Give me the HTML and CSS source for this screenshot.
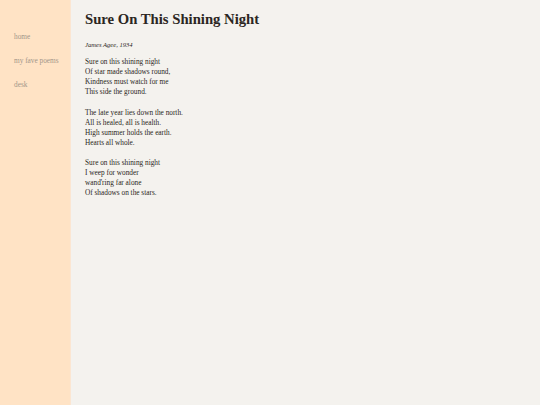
FILE: index.html
```html
<!DOCTYPE html>
<html>
<head>
<meta charset="utf-8">
<link rel="stylesheet" href="styles.css">
</head>
<body>
<div class="layout">
  <nav class="sidebar">
    <a class="nav-link" href="#">home</a>
    <a class="nav-link" href="#">my fave poems</a>
    <a class="nav-link" href="#">desk</a>
  </nav>
  <main class="content">
    <h1 class="title">Sure On This Shining Night</h1>
    <p class="author">James Agee, 1934</p>
    <p class="stanza">Sure on this shining night<br>Of star made shadows round,<br>Kindness must watch for me<br>This side the ground.</p>
    <p class="stanza">The late year lies down the north.<br>All is healed, all is health.<br>High summer holds the earth.<br>Hearts all whole.</p>
    <p class="stanza">Sure on this shining night<br>I weep for wonder<br>wand'ring far alone<br>Of shadows on the stars.</p>
  </main>
</div>
</body>
</html>
```
FILE: styles.css
```css
html, body {
  margin: 0;
  padding: 0;
  height: 100%;
}
body {
  font-family: "Liberation Serif", "DejaVu Serif", serif;
  background: #f4f2ee;
  color: #2b2622;
}
.layout {
  display: flex;
  min-height: 100%;
}
.sidebar {
  width: 71px;
  flex-shrink: 0;
  background: #ffe3c5;
  border-right: 1px solid #fbe6d2;
  display: flex;
  flex-direction: column;
  gap: 15px;
  padding: 32px 0 0 14px;
  box-sizing: border-box;
}
.nav-link {
  color: #a3968a;
  text-decoration: none;
  font-size: 7.3px;
  line-height: 9px;
}
.content {
  padding: 10px 0 0 14px;
}
.title {
  margin: 0;
  font-size: 14.7px;
  line-height: 18px;
  font-weight: bold;
  color: #2b2622;
}
.author {
  margin: 12px 0 0;
  font-style: italic;
  font-size: 6.6px;
  line-height: 10px;
}
.stanza {
  margin: 7px 0 10.5px;
  font-size: 7.3px;
  line-height: 10px;
}
.stanza + .stanza {
  margin-top: 0;
}
```
